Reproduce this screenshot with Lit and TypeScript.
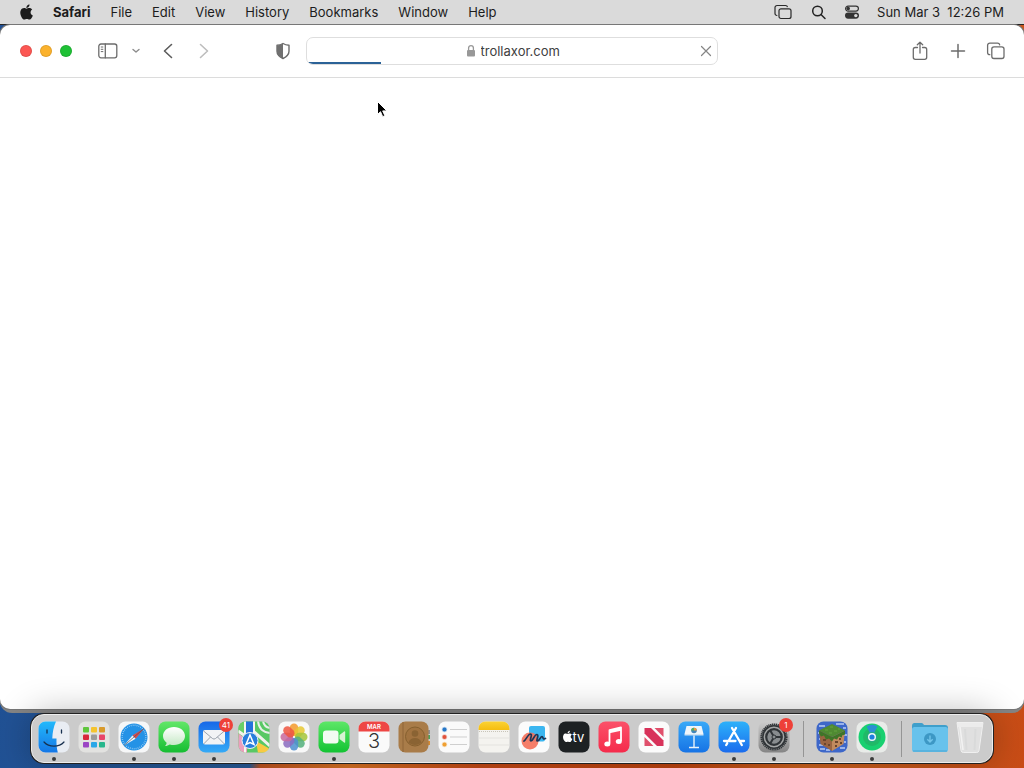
import { LitElement, html, css, svg, nothing, TemplateResult, SVGTemplateResult } from "lit";
import { customElement, property } from "lit/decorators.js";

const APPLE =
  "M11.2 8.5c0-1.600 1.300-2.400 1.400-2.500-.8-1.100-1.900-1.300-2.400-1.300-1-.1-2 .6-2.500.6s-1.300-.6-2.100-.6C4.500 4.700 3.500 5.300 2.900 6.300c-1.200 2-.3 5 .8 6.600.6.8 1.200 1.700 2.100 1.700.8 0 1.200-.5 2.200-.5s1.300.5 2.200.5c.9 0 1.500-.8 2-1.600.7-.9.900-1.800.9-1.900 0 0-1.900-.7-1.900-2.600zM9.600 3.600c.4-.6.8-1.300.7-2.100-.7 0-1.500.5-2 1-.4.5-.8 1.300-.7 2 .8.1 1.500-.4 2-.9z";

interface DockApp {
  name: string;
  art: SVGTemplateResult;
  running?: boolean;
  badge?: string;
}

const tile = (fill: string) => svg`<rect x="0.5" y="0.5" width="31" height="31" rx="7" fill=${fill} />`;

const padColors = ["#5fc63c", "#f5c42e", "#d99a2b", "#d8263a", "#9b9b9b", "#e8456a", "#9b45c4", "#2aa7e8", "#27b78c"];
const petals = ["#f59a2c", "#e8c832", "#a5c63b", "#54b07c", "#4c8fd0", "#8a6bc0", "#c9689c", "#ee5540"];

const apps: DockApp[] = [
  {
    name: "Finder",
    running: true,
    art: svg`<defs><linearGradient id="fi" x2="0" y2="1"><stop stop-color="#22b9fb"/><stop offset="1" stop-color="#1577e6"/></linearGradient></defs>
      ${tile("#e9edf3")}
      <path d="M7.500 .5H18C15.500 6 14.500 11 14.300 17.500h4.200c-.2 5 .2 10 1.300 14H7.500a7 7 0 0 1-7-7v-17a7 7 0 0 1 7-7z" fill="url(#fi)"/>
      <path d="M9 9v3M23.500 9v3" stroke="#17304f" stroke-width="1.300" stroke-linecap="round"/>
      <path d="M6 21c5 5.500 15 5.500 20 0" fill="none" stroke="#17304f" stroke-width="1.200" stroke-linecap="round"/>`,
  },
  {
    name: "Launchpad",
    art: svg`${tile("#e2e2e0")}${padColors.map(
      (c, i) => svg`<rect x=${5 + (i % 3) * 8} y=${6 + Math.floor(i / 3) * 7.5} width="6" height="5.500" rx="1" fill=${c}/>`
    )}`,
  },
  {
    name: "Safari",
    running: true,
    art: svg`${tile("#f6f7f8")}<circle cx="16" cy="16" r="13.500" fill="#2492e6"/>
      <circle cx="16" cy="16" r="11.800" fill="none" stroke="#b9def8" stroke-width="1.500" stroke-dasharray=".6 1.400"/>
      <path d="M26 7.500 17.600 17.800 14.400 14.400z" fill="#e24a45"/><path d="M6 24.500 14.400 14.400 17.600 17.800z" fill="#f4f6f8"/>
      <path d="M26 7.500 6 24.500" stroke="#44546a" stroke-width=".7"/>`,
  },
  {
    name: "Messages",
    running: true,
    art: svg`<defs><linearGradient id="gr" x2="0" y2="1"><stop stop-color="#62e768"/><stop offset="1" stop-color="#16bd32"/></linearGradient>
      <linearGradient id="bu" x2="0" y2="1"><stop stop-color="#fff"/><stop offset="1" stop-color="#c4e8c4"/></linearGradient></defs>
      ${tile("url(#gr)")}<path d="M16 6c6.300 0 11 3.900 11 9s-4.700 9-11 9c-1.500 0-3-.2-4.200-.6-1.300.9-3 1.500-4.800 1.600 1-.9 1.500-2 1.600-3.300C6.400 20.100 5 17.700 5 15c0-5.100 4.700-9 11-9z" fill="url(#bu)"/>`,
  },
  {
    name: "Mail",
    running: true,
    badge: "41",
    art: svg`<defs><linearGradient id="ma" x2="0" y2="1"><stop stop-color="#1768e8"/><stop offset="1" stop-color="#35aaf6"/></linearGradient></defs>
      ${tile("url(#ma)")}<rect x="5" y="9" width="22" height="14.500" rx="2" fill="#f2f3f5"/>
      <path d="M5.600 10 14.500 17.500q1.500 1.200 3 0L26.400 10M5.600 23 12.500 16M26.400 23 19.500 16" fill="none" stroke="#929aa5" stroke-width=".9"/>`,
  },
  {
    name: "Maps",
    art: svg`<defs><clipPath id="mc"><rect x=".5" y=".5" width="31" height="31" rx="7"/></clipPath></defs>
      <g clip-path="url(#mc)"><rect width="32" height="32" fill="#58c864"/>
      <path d="M0 0h9v9L0 17z" fill="#69cf68"/><path d="M0 12 9 19v13H0z" fill="#ec9fbd"/>
      <path d="M0 10 32 32M14 9 32 25" stroke="#f2f2ec" stroke-width="3"/>
      <path d="M18 20 32 28v4H20z" fill="#f8ca43"/><path d="M25 0q1 6 7 7M20 0q1 11 12 12" fill="none" stroke="#e8eee8" stroke-width="2"/>
      <path d="M7 0v32M16 0v12" stroke="#f6f5f0" stroke-width="2"/><path d="M8 0h7v17H8z" fill="#2472dc"/></g>
      <circle cx="12" cy="19.500" r="8" fill="#287edc" stroke="#eef5fb" stroke-width="1"/><path d="M12 14 16 23.500 12 21.500 8 23.500z" fill="none" stroke="#fff" stroke-width="1.500"/>`,
  },
  {
    name: "Photos",
    art: svg`${tile("#f8f8f8")}${petals.map(
      (c, i) => svg`<rect x="11.800" y="2.500" width="8.400" height="12.500" rx="4.200" fill=${c} fill-opacity=".85" transform="rotate(${i * 45} 16 16)"/>`
    )}`,
  },
  {
    name: "FaceTime",
    running: true,
    art: svg`<defs><linearGradient id="fg" x2="0" y2="1"><stop stop-color="#5de767"/><stop offset="1" stop-color="#13c333"/></linearGradient></defs>
      ${tile("url(#fg)")}<rect x="5" y="9.500" width="15.500" height="13" rx="3" fill="#f3fbf2"/><path d="m21.500 14 4.600-3.500q1.100-.7 1.100.7v9.600q0 1.400-1.100.7L21.500 18z" fill="#d7f3d4"/>`,
  },
  {
    name: "Calendar",
    art: svg`${tile("#fafafa")}<path d="M.5 10.500v-3a7 7 0 0 1 7-7h17a7 7 0 0 1 7 7v3z" fill="#ee4644"/>
      <text x="16" y="8" class="month">MAR</text><text x="16" y="27" class="day">3</text>`,
  },
  {
    name: "Contacts",
    art: svg`<path d="M29 9h3v4h-3z" fill="#8c8f91"/><path d="M29 14h3v4h-3z" fill="#47a35c"/><path d="M29 20h3v4h-3z" fill="#d68b32"/>
      <rect x=".5" y=".5" width="30" height="31" rx="7" fill="#a97c49"/><path d="M5 1v30" stroke="#8e6539" stroke-width="1"/>
      <circle cx="17" cy="15.500" r="9.500" fill="#a17340" stroke="#86602f" stroke-width="1"/>
      <circle cx="17" cy="12.500" r="3.300" fill="#8a6333"/><path d="M10.500 21.500q1.500-4.500 6.500-4.500t6.500 4.500q-6.500 5-13 0z" fill="#8a6333"/>`,
  },
  {
    name: "Reminders",
    art: svg`${tile("#fafafa")}${["#2878c8", "#e0523c", "#f0a032"].map(
      (c, i) => svg`<circle cx="6.500" cy=${8.5 + i * 7.5} r="2" fill=${c} stroke=${c} stroke-opacity=".3" stroke-width="1.500"/><path d="M12 ${8.5 + i * 7.5}h17" stroke="#cfcfcf" stroke-width="1"/>`
    )}`,
  },
  {
    name: "Notes",
    art: svg`<defs><linearGradient id="no" x2="0" y2="1"><stop stop-color="#fbd234"/><stop offset="1" stop-color="#f5bd10"/></linearGradient></defs>
      ${tile("#f4f3ef")}<path d="M.5 9V7.500a7 7 0 0 1 7-7h17a7 7 0 0 1 7 7V9z" fill="url(#no)"/>
      <path d="M1 10.500h30" stroke="#c8c4b8" stroke-dasharray="1 1"/><path d="M1 17h30M1 24h30" stroke="#e4e3df"/>`,
  },
  {
    name: "Freeform",
    art: svg`${tile("#fbfbfb")}<rect x="11" y="5" width="16" height="15.500" rx="2" fill="#3bb6f0"/><circle cx="12" cy="20" r="8.500" fill="#f4735c" fill-opacity=".92"/>
      <path d="M6 20c2-1 4-7 6.500-7s-1.500 7 .5 7 3.500-7 6-6.500-1.500 6.500.5 6.500 3-4.500 4.500-4.500 0 3.500 3.500 2" fill="none" stroke="#1c3556" stroke-width="1.700" stroke-linecap="round"/>`,
  },
  {
    name: "Apple TV",
    art: svg`${tile("#1d2123")}<g transform="translate(3 8.500) scale(.86)"><path d=${APPLE} fill="#fff"/></g><text x="14.500" y="21" class="tv">tv</text>`,
  },
  {
    name: "Music",
    art: svg`<defs><linearGradient id="mu" x2="0" y2="1"><stop stop-color="#fb5169"/><stop offset="1" stop-color="#f52b4b"/></linearGradient></defs>
      ${tile("url(#mu)")}<path d="M11.500 22.500V9.200L23 6.500v13.500" fill="none" stroke="#fff" stroke-width="1.800" stroke-linejoin="round"/><path d="M11.500 9 23 6.500v3.300l-11.500 2.500z" fill="#fff"/>
      <ellipse cx="9.300" cy="23" rx="3" ry="2.500" fill="#fff"/><ellipse cx="20.800" cy="20.500" rx="3" ry="2.500" fill="#fff"/>`,
  },
  {
    name: "News",
    art: svg`${tile("#fbfbfb")}<path d="M6.500 7h6.500L25.500 19.500V25H19L6.500 12.500z" fill="#d8325a"/><path d="M16.500 7h9v9zM6.500 16l9 9h-9z" fill="#e0506c"/>`,
  },
  {
    name: "Keynote",
    art: svg`<defs><linearGradient id="ke" x2="0" y2="1"><stop stop-color="#38a9f8"/><stop offset="1" stop-color="#1673e5"/></linearGradient></defs>
      ${tile("url(#ke)")}<path d="M8.500 5h15L25.500 13h-19z" fill="#eef5fb"/><path d="M6.500 13h19v1.500h-19z" fill="#cfe2f2"/>
      <path d="M16 14.500V26M11 26.500h10" stroke="#e8f2fa" stroke-width="1.400"/><circle cx="16" cy="9.500" r="2.800" fill="#4285b8"/><path d="M16 9.500V6.700a2.800 2.800 0 0 1 2.800 2.800z" fill="#f09a39"/><path d="M16 9.500h-2.800A2.800 2.800 0 0 1 16 6.700z" fill="#58af5a"/>`,
  },
  {
    name: "App Store",
    running: true,
    art: svg`<defs><linearGradient id="as" x2="0" y2="1"><stop stop-color="#2cb1fa"/><stop offset="1" stop-color="#1b6ced"/></linearGradient></defs>
      ${tile("url(#as)")}<path d="M14 7 23.800 24M18 7l-7.500 13M9.200 22.300l-1 1.700M6 20h11.500M21.500 20H26" stroke="#fff" stroke-width="2.300" stroke-linecap="round"/>`,
  },
  {
    name: "System Settings",
    running: true,
    badge: "1",
    art: svg`<defs><linearGradient id="se" x2="0" y2="1"><stop stop-color="#cdcdcd"/><stop offset="1" stop-color="#858585"/></linearGradient></defs>
      ${tile("url(#se)")}<circle cx="16" cy="16" r="12.600" fill="#a4a6a6" stroke="#303437" stroke-width="2" stroke-dasharray="1.300 .6"/>
      <circle cx="16" cy="16" r="11.200" fill="none" stroke="#303437" stroke-width="1.600"/>
      <circle cx="16" cy="16" r="7.800" fill="#898d8f" stroke="#303437" stroke-width="2.200"/>
      <path d="M16 16h8M16 16l-4-7M16 16l-4 7" stroke="#303437" stroke-width="2"/><circle cx="16" cy="16" r="2" fill="#8a8e90" stroke="#303437"/>`,
  },
];

const games: DockApp[] = [
  {
    name: "Minecraft",
    running: true,
    art: svg`${tile("#3d67c9")}<path d="M3 5h6M20 3h8M2 12h2M28 14h3M3 24h4M24 27h5M10 29h4M3 18h1M4 28h5M27 7h3M28 21h2" stroke="#b9cdf3" stroke-width="1.500"/>
      <path d="M16 3 29 9.500 16 16 3 9.500z" fill="#4f8a32"/><path d="M3 9.500 16 16v14L4.500 23z" fill="#9a6542"/><path d="M29 9.500 16 16v14l11.500-7z" fill="#c08a5e"/>
      <path d="M3 9.500 16 16l13-6.500v4l-3 1v2l-3-1-2 3-3-1-2 3-3-3-3 1-2-4-3 1-2-3z" fill="#3f7528"/>
      <path d="M9 9h3M14 6h3M18 10h3M22 8h2M13 12h3" stroke="#5f9a3c" stroke-width="1.500"/>
      <path d="M7 19h3M12 24h2M8 23h2M19 21h3M23 18h2M19 25h2M24 22h2" stroke="#6b452d" stroke-width="1.800"/>`,
  },
  {
    name: "Find My",
    running: true,
    art: svg`${tile("#e9ece9")}<circle cx="16" cy="16" r="13.500" fill="#18d070"/><circle cx="16" cy="16" r="9" fill="#20b968"/>
      <path d="M16 16 10.500 5.500q5.500-3.500 11 0z" fill="#2b8fd2"/><circle cx="16" cy="16" r="5" fill="#27a987"/><circle cx="16" cy="16" r="3.300" fill="#1d7fe0" stroke="#eefaf6" stroke-width="1.400"/>`,
  },
];

const places: DockApp[] = [
  {
    name: "Downloads",
    art: svg`<path d="M-2 5q0-3 2.500-3h7q1.500 0 2.500 2h21q3 0 3 3v4H-2z" fill="#3f9fcb"/><rect x="-2" y="6" width="36" height="25" rx="2.500" fill="#68c2ec"/><path d="M-1 30h34" stroke="#4aa5d2"/>
      <circle cx="16" cy="18" r="6" fill="#3d98c5"/><path d="M16 14.500v6M13.300 18.200l2.700 2.700 2.700-2.700" fill="none" stroke="#73c6ec" stroke-width="1.400"/>`,
  },
  {
    name: "Trash",
    art: svg`<path d="M3 1.500h26l-4 28q-.3 2-2.300 2H9.300Q7.300 31.500 7 29.500z" fill="#e0e0e0" stroke="#f0f0f0"/><path d="M3 2h26l-.6 4H3.600z" fill="#ececec"/>
      <path d="M11 8l1.500 21M21.500 8l-1 21" stroke="#d9dada" stroke-width="2"/><path d="M6 6 9 29" stroke="#f2f2f2" stroke-width="1.500"/>`,
  },
];

@customElement("mac-menubar")
export class MacMenubar extends LitElement {
  static styles = css`
    :host {
      display: flex;
      align-items: center;
      justify-content: space-between;
      box-sizing: border-box;
      height: 25px;
      padding: 0 20px 1px;
      background: #dadada;
      border-bottom: 1px solid #262626;
      font: 13px/22px Inter, "Liberation Sans", sans-serif;
      color: #1c1c1c;
    }
    nav,
    .status {
      display: flex;
      align-items: center;
    }
    nav {
      gap: 20px;
    }
    button {
      all: unset;
      white-space: nowrap;
    }
    svg {
      display: block;
    }
    .app {
      font-weight: 700;
    }
    .status {
      gap: 17px;
    }
  `;

  render() {
    return html`
      <nav aria-label="Menu bar">
        <button aria-label="Apple">
          <svg width="13" height="16" viewBox="2.100 1.400 11.200 13.300"><path d=${APPLE} fill="#1c1c1c" /></svg>
        </button>
        <button class="app">Safari</button>
        ${["File", "Edit", "View", "History", "Bookmarks", "Window", "Help"].map((m) => html`<button>${m}</button>`)}
      </nav>
      <div class="status">
        <button aria-label="Stage Manager">
          <svg width="18" height="16" viewBox="0 0 18 16" fill="none" stroke="#2a2a2a" stroke-width="1.200">
            <rect x="5" y="4.800" width="12" height="9.700" rx="2" />
            <path d="M3.300 11.500H3a2 2 0 0 1-2-2V3.500a2 2 0 0 1 2-2h8.500a2 2 0 0 1 2 1.600" />
          </svg>
        </button>
        <button aria-label="Spotlight">
          <svg width="18" height="16" viewBox="0 0 18 16" fill="none" stroke="#222" stroke-width="1.500">
            <circle cx="8.500" cy="7" r="4.800" /><path d="m12 10.500 4 4" stroke-linecap="round" />
          </svg>
        </button>
        <button aria-label="Control Centre">
          <svg width="16" height="16" viewBox="0 0 16 16">
            <rect x="1.600" y="2.100" width="12.800" height="5" rx="2.500" fill="none" stroke="#333" stroke-width="1.200" />
            <circle cx="4.200" cy="4.600" r="1.800" fill="#333" />
            <rect x="1" y="8.500" width="14" height="6.200" rx="3.100" fill="#333" /><circle cx="11.800" cy="11.600" r="1.700" fill="#dadada" />
          </svg>
        </button>
        <button>Sun Mar 3&nbsp; 12:26 PM</button>
      </div>
    `;
  }
}

@customElement("browser-window")
export class BrowserWindow extends LitElement {
  @property() address = "trollaxor.com";
  @property({ type: Number }) progress = 18;

  static styles = css`
    :host {
      display: flex;
      flex-direction: column;
      background: #fff;
      border-radius: 10px;
      overflow: hidden;
      font: 13px/16px Inter, "Liberation Sans", sans-serif;
    }
    .toolbar {
      display: grid;
      grid-template-columns: 1fr minmax(200px, 412px) 1fr;
      align-items: center;
      height: 52px;
      border-bottom: 1px solid #dcdcdc;
    }
    .side {
      display: flex;
      align-items: center;
    }
    .left {
      padding: 0 15px 0 20px;
    }
    .right {
      justify-content: flex-end;
      gap: 18px;
      padding-right: 18px;
    }
    button {
      all: unset;
      display: block;
    }
    svg {
      display: block;
      fill: none;
      stroke: #6c6c6c;
      stroke-linecap: round;
      stroke-linejoin: round;
    }
    .lights {
      display: flex;
      gap: 8px;
      margin-right: 26px;
    }
    .light {
      width: 12px;
      height: 12px;
      border-radius: 50%;
      box-shadow: inset 0 0 0 1px rgba(0, 0, 0, 0.1);
    }
    .close {
      background: #fc5753;
    }
    .minimise {
      background: #fbb22d;
    }
    .zoom {
      background: #1fc136;
    }
    .chevron {
      margin: 0 21px 0 13px;
    }
    .forward {
      margin-left: 24px;
    }
    .shield {
      margin-left: auto;
    }
    .field {
      display: grid;
      grid-template-columns: 1fr auto 1fr;
      align-items: center;
      height: 28px;
      box-sizing: border-box;
      border: 1px solid #dedede;
      border-radius: 7px;
      overflow: hidden;
      position: relative;
    }
    .address {
      grid-column: 2;
      display: flex;
      align-items: center;
      gap: 5px;
      padding-left: 2px;
    }
    input {
      all: unset;
      width: 80px;
      color: #404040;
    }
    .stop {
      justify-self: end;
      margin-right: 5px;
    }
    .bar {
      position: absolute;
      left: 0;
      bottom: 0;
      height: 2px;
      background: #2b6297;
    }
    .page {
      flex: 1;
    }
  `;

  render() {
    return html`
      <header class="toolbar">
        <div class="side left">
          <div class="lights">
            <button class="light close" aria-label="Close"></button>
            <button class="light minimise" aria-label="Minimise"></button>
            <button class="light zoom" aria-label="Zoom"></button>
          </div>
          <button aria-label="Sidebar">
            <svg width="20" height="16" viewBox="0 0 20 16" stroke-width="1.300">
              <rect x="0.800" y="1" width="18" height="13.800" rx="2.200" /><path d="M7.300 1v13.800" />
              <path d="M3.200 4h1.700M3.200 6.300h1.700M3.200 8.600h1.700" stroke-width="1" />
            </svg>
          </button>
          <button class="chevron" aria-label="Tab groups">
            <svg width="10" height="6" viewBox="0 0 10 6" stroke-width="1.400"><path d="m2 1.500 3 2.500 3-2.500" stroke="#8c8c8c" /></svg>
          </button>
          <button aria-label="Back">
            <svg width="12" height="16" viewBox="0 0 12 16" stroke-width="1.600"><path d="M9.500 1.500 2.500 8l7 6.500" stroke="#5c5c5c" /></svg>
          </button>
          <button class="forward" aria-label="Forward">
            <svg width="12" height="16" viewBox="0 0 12 16" stroke-width="1.600"><path d="m2.500 1.500 7 6.500-7 6.500" stroke="#bdbdbd" /></svg>
          </button>
          <button class="shield" aria-label="Privacy report">
            <svg width="16" height="18" viewBox="0 0 16 18" stroke-width="1.400">
              <path d="M8 1.500c2 1.300 4 1.700 6 1.800v6c0 3.300-2.700 5.600-6 7.200-3.300-1.600-6-3.900-6-7.200v-6c2-.1 4-.5 6-1.800z" />
              <path d="M8 1.500v15c-3.300-1.600-6-3.900-6-7.200v-6c2-.1 4-.5 6-1.800z" fill="#707070" stroke="none" />
            </svg>
          </button>
        </div>
        <div class="field">
          <label class="address">
            <svg width="10" height="14" viewBox="0 0 10 14" aria-label="Secure site">
              <path d="M2.600 6V4a2.400 2.400 0 0 1 4.800 0v2" stroke="#989898" stroke-width="1.300" />
              <rect x="1" y="6" width="8" height="6.500" rx="1" fill="#989898" stroke="none" />
            </svg>
            <input type="text" aria-label="Address" spellcheck="false" .value=${this.address} />
          </label>
          <button class="stop" aria-label="Stop loading">
            <svg width="12" height="12" viewBox="0 0 12 12" stroke-width="1.200"><path d="m1.500 1.500 9 9M10.500 1.500l-9 9" stroke="#858585" /></svg>
          </button>
          <div class="bar" style="width:${this.progress}%"></div>
        </div>
        <div class="side right">
          <button aria-label="Share">
            <svg width="20" height="20" viewBox="0 0 20 20" stroke-width="1.300">
              <path d="M7.500 6.500H5.300a2 2 0 0 0-2 2v7.800a2 2 0 0 0 2 2h9.400a2 2 0 0 0 2-2V8.500a2 2 0 0 0-2-2H12.500M10 12V1.400M7.300 3.800l2.700-2.500 2.700 2.500" />
            </svg>
          </button>
          <button aria-label="New tab">
            <svg width="20" height="20" viewBox="0 0 20 20" stroke-width="1.500"><path d="M3.500 10h13M10 3.500v13" /></svg>
          </button>
          <button aria-label="Tab overview">
            <svg width="20" height="20" viewBox="0 0 20 20" stroke-width="1.300">
              <rect x="5.800" y="5.800" width="12.200" height="11.700" rx="2.200" />
              <path d="M3.800 13.700a2.200 2.200 0 0 1-2.200-2V4.300a2.200 2.200 0 0 1 2.200-2.200h7.700a2.200 2.200 0 0 1 2.200 1.800" />
            </svg>
          </button>
        </div>
      </header>
      <main class="page"></main>
    `;
  }
}

@customElement("app-dock")
export class AppDock extends LitElement {
  static styles = css`
    :host {
      display: flex;
      box-sizing: border-box;
      padding: 6px 2px 1px;
      border: 1px solid #ededed;
      border-radius: 13px;
      background: #cbcbcb;
      box-shadow: 0 0 0 1px #222, 0 0 36px rgba(0, 0, 0, 0.3);
      font-family: Inter, "Liberation Sans", sans-serif;
    }
    button {
      all: unset;
      position: relative;
      display: flex;
      flex-direction: column;
      align-items: center;
      gap: 4px;
      width: 40px;
    }
    svg {
      display: block;
      width: 32px;
      height: 32px;
      overflow: visible;
    }
    .dot {
      width: 4px;
      height: 4px;
      border-radius: 50%;
    }
    .running {
      background: #3b3b3b;
    }
    .badge {
      position: absolute;
      top: -3px;
      right: 1px;
      width: 14px;
      height: 14px;
      border-radius: 50%;
      background: #ee4038;
      color: #fff;
      font-size: 8px;
      line-height: 14px;
      text-align: center;
    }
    .separator {
      width: 1px;
      height: 36px;
      margin: 0 8px 0 9px;
      background: #959595;
    }
    .month {
      font-size: 6px;
      font-weight: 600;
      fill: #fff;
      text-anchor: middle;
    }
    .day {
      font-size: 20px;
      font-weight: 300;
      fill: #333;
      text-anchor: middle;
    }
    .tv {
      font-size: 13px;
      fill: #fff;
    }
  `;

  private item(app: DockApp): TemplateResult {
    return html`<button aria-label=${app.name}>
      <svg viewBox="0 0 32 32">${app.art}</svg>
      <span class="dot ${app.running ? "running" : ""}"></span>
      ${app.badge ? html`<span class="badge">${app.badge}</span>` : nothing}
    </button>`;
  }

  render() {
    return html`
      ${apps.map((a) => this.item(a))}
      <span class="separator"></span>
      ${games.map((a) => this.item(a))}
      <span class="separator"></span>
      ${places.map((a) => this.item(a))}
    `;
  }
}

@customElement("app-root")
export class AppRoot extends LitElement {
  static styles = css`
    :host {
      display: flex;
      flex-direction: column;
      height: 100vh;
      position: relative;
      overflow: hidden;
      background: linear-gradient(95deg, #1f4f94 0%, #285b98 29%, #c3541f 30%, #dc7424 38%, #c94a16 50%, #c1440f 68%, #d0641f 80%, #c94c16 100%);
    }
    .stack {
      flex: 1;
      display: flex;
      flex-direction: column;
      padding-bottom: 4px;
      border-radius: 10px 10px 12px 12px;
      background: #858585;
    }
    browser-window {
      flex: 1;
      box-shadow: 0 0 0 1px #777;
    }
    app-dock {
      align-self: center;
      margin: 1px 0 5px;
      position: relative;
    }
    .pointer {
      position: absolute;
      left: 376px;
      top: 100px;
    }
  `;

  render() {
    return html`
      <mac-menubar></mac-menubar>
      <div class="stack"><browser-window></browser-window></div>
      <app-dock></app-dock>
      <svg class="pointer" width="13" height="19" viewBox="0 0 13 19">
        <path d="M1.500 1.500v13l3-2.800 2.200 5 2.200-1-2.200-4.800h4.200z" fill="#000" stroke="#fff" stroke-width="1" />
      </svg>
    `;
  }
}
